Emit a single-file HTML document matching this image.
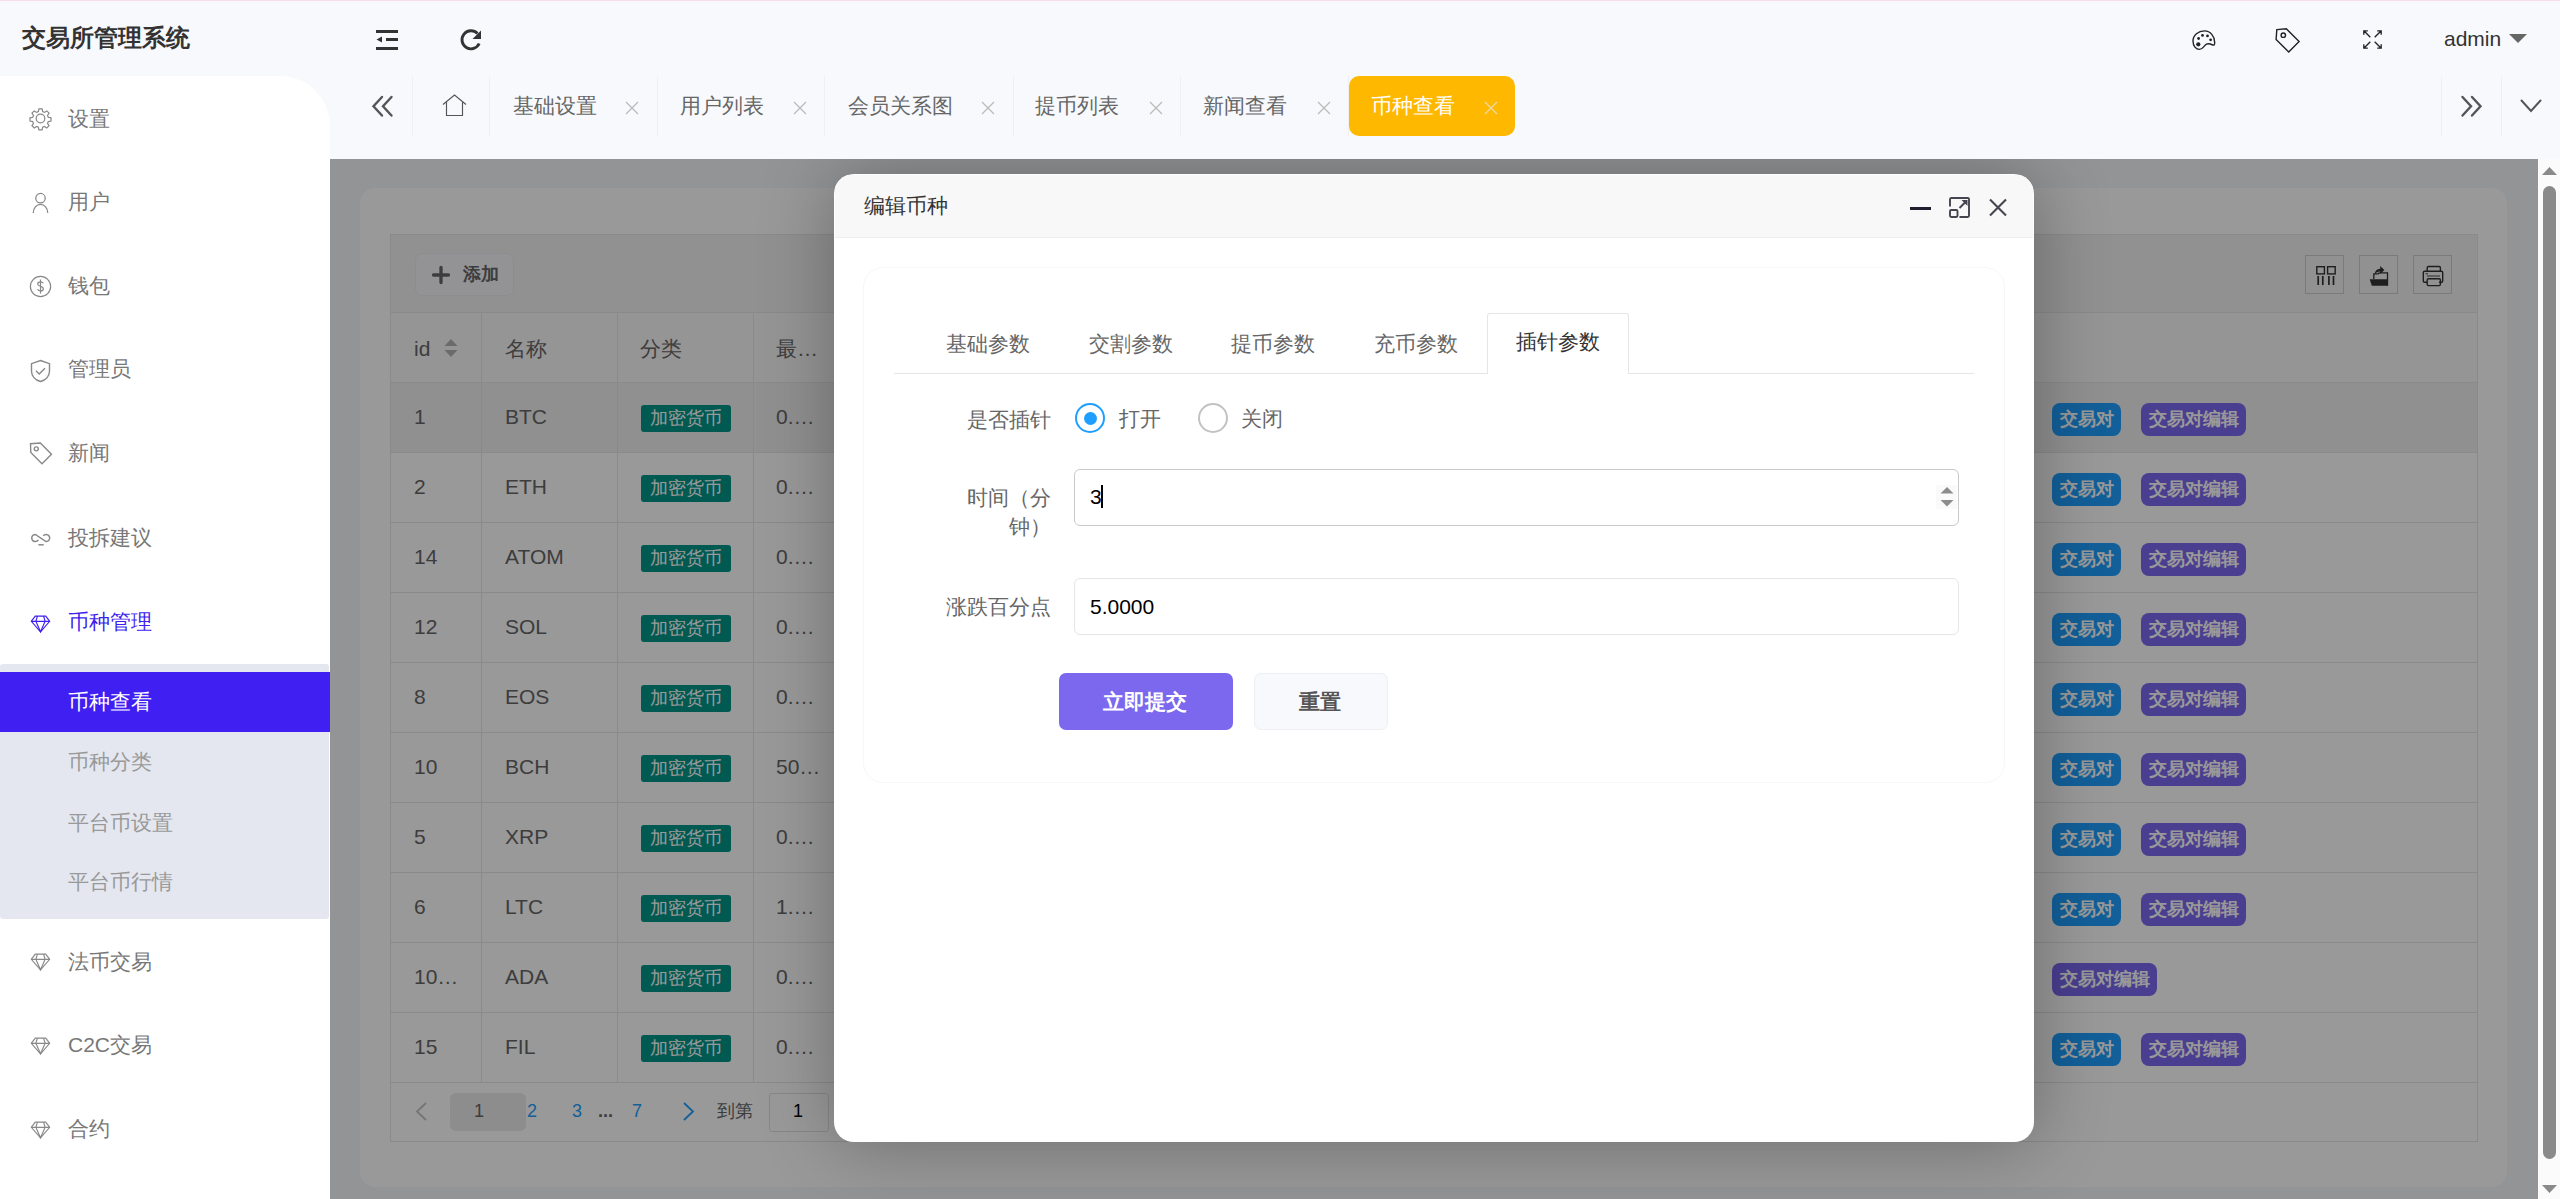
<!DOCTYPE html>
<html><head><meta charset="utf-8">
<style>
*{box-sizing:border-box;margin:0;padding:0}
html,body{width:2560px;height:1199px;overflow:hidden}
body{position:relative;background:#f8f9fc;font-family:"Liberation Sans",sans-serif;color:#333}
.a{position:absolute}
.t{position:absolute;white-space:nowrap;line-height:1}
svg{position:absolute;overflow:visible}
.sep{top:76px;width:1px;height:60px;background:#f0f0f4}
.tb{top:95px;font-size:21px;color:#666}
.cl{top:102px;width:12px;height:12px;fill:none;stroke:#bbb;stroke-width:1.3}
.td{font-size:21px;color:#666}
.tag{height:27px;width:90px;background:#009688;color:#fff;font-size:18px;line-height:27px;text-align:center;border-radius:3px;white-space:nowrap}
.bdg{height:33px;color:#fff;font-size:18px;font-weight:bold;line-height:33px;text-align:center;border-radius:8px;white-space:nowrap}
.tbox{top:255px;width:39px;height:39px;border:1px solid #ccc}
.pg{top:1102px;font-size:18px}
.mt{top:333px;font-size:21px;color:#666}
.fl{font-size:21px;color:#666}
.mi{left:68px;font-size:21px;color:#777}
</style></head><body>
<!-- top pink line -->
<div class="a" style="left:0;top:0;width:2560px;height:1px;background:#f3dfe5"></div>

<!-- header -->
<div class="t" id="title" style="left:22px;top:26px;font-size:24px;font-weight:bold;color:#333">交易所管理系统</div>


<!-- header icons -->
<svg style="left:376px;top:30px" width="22" height="20" viewBox="0 0 22 20"><rect x="0" y="0" width="22" height="3" fill="#333"/><rect x="10" y="8" width="12" height="3" fill="#333"/><rect x="0" y="17" width="22" height="3" fill="#333"/><path d="M0.5 9.5L6 6.5v6z" fill="#333"/></svg>
<svg style="left:460px;top:29px" width="22" height="22" viewBox="0 0 22 22"><path d="M19.2 14.5A9 9 0 1 1 17.5 4.6" fill="none" stroke="#333" stroke-width="2.9"/><path d="M21 1.5v8.5h-8.5z" fill="#333"/></svg>
<svg style="left:2192px;top:30px" width="25" height="21" viewBox="0 0 25 21" fill="none" stroke="#222" stroke-width="1.4"><path d="M12.5 .9C6.3 .9 1 5 1 11c0 5 3 8.4 6.5 8.4 3.2 0 4.4-3.7 7-5.2 2.3-1.3 4.7.1 6.3.8 1.2.4 1.9-.3 1.9-2.5C22.7 6.4 18.4.9 12.5.9z"/><circle cx="6.3" cy="14.3" r="2.1" fill="#222" stroke="none"/><circle cx="6.6" cy="8.5" r="1.4" fill="#222" stroke="none"/><circle cx="10.5" cy="5.4" r="1.4" fill="#222" stroke="none"/><circle cx="15.5" cy="5.9" r="1.4" fill="#222" stroke="none"/><circle cx="18.6" cy="9.8" r="1.4" fill="#222" stroke="none"/></svg>
<svg style="left:2275px;top:27px" width="26" height="26" viewBox="0 0 26 26" fill="none" stroke="#222" stroke-width="1.4"><path d="M1.8 2.6L11.3 1.8l12.8 12.8-10.4 10.4L1.1 12.4z"/><circle cx="8.3" cy="8.2" r="2.2"/></svg>
<svg style="left:2363px;top:30px" width="19" height="19" viewBox="0 0 19 19" fill="none" stroke="#222" stroke-width="1.3"><path d="M.8 4.8V.8h4M.8 .8l6.5 6.5M14.2 .8h4v4M18.2 .8l-6.5 6.5M.8 14.2v4h4M.8 18.2l6.5-6.5M18.2 14.2v4h-4M18.2 18.2l-6.5-6.5"/></svg>
<div class="t" style="left:2444px;top:28px;font-size:21px;color:#333">admin</div>
<svg style="left:2509px;top:34px" width="18" height="9" viewBox="0 0 18 9"><path d="M0 0h18L9 9z" fill="#666"/></svg>

<!-- tabs -->
<svg style="left:372px;top:96px" width="21" height="21" viewBox="0 0 21 21" fill="none" stroke="#555" stroke-width="2.4" stroke-linecap="round"><path d="M10 1L1.5 10.2 10 19.5M19.5 1L11 10.2l8.5 9.3"/></svg>
<div class="a sep" style="left:412px"></div>
<svg style="left:442px;top:94px" width="25" height="23" viewBox="0 0 25 23" fill="none" stroke="#555" stroke-width="1.15"><path d="M1 10.5L12.5 1 24 10.5M4.5 8.3V21.5h16V8.3"/></svg>
<div class="a sep" style="left:489px"></div>
<div class="t tb" style="left:513px">基础设置</div><svg class="cl" style="left:626px"><path d="M0 0L12 12M12 0L0 12"/></svg>
<div class="a sep" style="left:657px"></div>
<div class="t tb" style="left:680px">用户列表</div><svg class="cl" style="left:794px"><path d="M0 0L12 12M12 0L0 12"/></svg>
<div class="a sep" style="left:824px"></div>
<div class="t tb" style="left:848px">会员关系图</div><svg class="cl" style="left:982px"><path d="M0 0L12 12M12 0L0 12"/></svg>
<div class="a sep" style="left:1013px"></div>
<div class="t tb" style="left:1035px">提币列表</div><svg class="cl" style="left:1150px"><path d="M0 0L12 12M12 0L0 12"/></svg>
<div class="a sep" style="left:1180px"></div>
<div class="t tb" style="left:1203px">新闻查看</div><svg class="cl" style="left:1318px"><path d="M0 0L12 12M12 0L0 12"/></svg>
<div class="a sep" style="left:1348px"></div>
<div class="a" style="left:1349px;top:76px;width:166px;height:60px;background:#ffb800;border-radius:10px"></div>
<div class="t tb" style="left:1371px;color:#fff">币种查看</div><svg class="cl" style="left:1485px;stroke:#e8d9a8"><path d="M0 0L12 12M12 0L0 12"/></svg>
<div class="a sep" style="left:2441px"></div>
<svg style="left:2461px;top:96px" width="21" height="21" viewBox="0 0 21 21" fill="none" stroke="#555" stroke-width="2.4" stroke-linecap="round"><path d="M1.5 1L10 10.2 1.5 19.5M11 1l8.5 9.2L11 19.5"/></svg>
<div class="a sep" style="left:2501px"></div>
<svg style="left:2520px;top:99px" width="22" height="14" viewBox="0 0 22 14" fill="none" stroke="#555" stroke-width="2" stroke-linecap="round"><path d="M1.5 1.5L11 12 20.5 1.5"/></svg>

<!-- sidebar -->
<div class="a" id="side" style="left:0;top:76px;width:330px;height:1123px;background:#fff;border-top-right-radius:50px"></div>


<!-- sidebar menu -->
<div id="menu">
<svg style="left:30px;top:108px" width="21" height="21" viewBox="0.8 0.8 22.4 22.4" fill="none" stroke="#888" stroke-width="1.3"><circle cx="12" cy="12" r="4.6"/><path d="M10.3 1.8h3.4l.6 2.9 1.9.8 2.5-1.6 2.4 2.4-1.6 2.5.8 1.9 2.9.6v3.4l-2.9.6-.8 1.9 1.6 2.5-2.4 2.4-2.5-1.6-1.9.8-.6 2.9h-3.4l-.6-2.9-1.9-.8-2.5 1.6-2.4-2.4 1.6-2.5-.8-1.9-2.9-.6v-3.4l2.9-.6.8-1.9-1.6-2.5 2.4-2.4 2.5 1.6 1.9-.8z"/></svg>
<div class="t mi" style="top:108px">设置</div>
<svg style="left:30px;top:193px" width="21" height="20" viewBox="1 1.5 22 22" fill="none" stroke="#888" stroke-width="1.4"><circle cx="12" cy="7.2" r="5.2"/><path d="M4 23.5c0-5.2 3.6-9.5 8-9.5s8 4.3 8 9.5"/></svg>
<div class="t mi" style="top:191px">用户</div>
<svg style="left:30px;top:276px" width="21" height="21" viewBox="0.8 0.8 22.4 22.4" fill="none" stroke="#888" stroke-width="1.3"><circle cx="12" cy="12" r="10.8"/><path d="M15 8.5c-.6-1-1.7-1.5-3-1.5-1.7 0-3 .9-3 2.3 0 3 6 1.8 6 5 0 1.4-1.3 2.4-3 2.4-1.4 0-2.6-.6-3.2-1.7M12 4.5v15"/></svg>
<div class="t mi" style="top:275px">钱包</div>
<svg style="left:30px;top:360px" width="21" height="22" viewBox="1.5 1 21 22" fill="none" stroke="#888" stroke-width="1.4"><path d="M12 1.5l9 3.2v7.3c0 5.3-3.9 9.2-9 10.5-5.1-1.3-9-5.2-9-10.5V4.7z"/><path d="M7.5 11.8l3.2 3.2 5.8-5.8"/></svg>
<div class="t mi" style="top:358px">管理员</div>
<svg style="left:30px;top:442px" width="22" height="23" viewBox="1 1 22 22.5" fill="none" stroke="#888" stroke-width="1.4"><path d="M1.5 2.5l.3 8.8L13 22.5l9.5-9.5L11.3 1.8z"/><circle cx="7.3" cy="7.6" r="2"/></svg>
<div class="t mi" style="top:442px">新闻</div>
<svg style="left:30px;top:530px" width="22" height="18" viewBox="30 530 22 18" fill="none" stroke="#888" stroke-width="1.5"><path d="M38.4 539.9A3.6 3.6 0 1 1 35.3 534.4L46 541.6A3.6 3.6 0 1 0 43.2 535.9"/><path d="M38.4 544.8h5.3"/></svg>
<div class="t mi" style="top:527px">投拆建议</div>
<svg style="left:30px;top:613px" width="21" height="21" viewBox="0 0 24 24" fill="none" stroke="#3f1ff0" stroke-width="1.3"><path d="M6 3.5h12l4.5 6L12 21.5 1.5 9.5z"/><path d="M1.5 9.5h21M8.5 3.5l-1.8 6L12 21.5l5.3-12-1.8-6"/></svg>
<div class="t mi" style="top:611px;color:#3f1ff0">币种管理</div>
<div class="a" style="left:0;top:664px;width:329px;height:255px;background:#e4e7ef;border-radius:3px"></div>
<div class="a" style="left:0;top:672px;width:330px;height:60px;background:#3f1ff1"></div>
<div class="t mi" style="top:691px;color:#fff">币种查看</div>
<div class="t mi" style="top:751px;color:#999">币种分类</div>
<div class="t mi" style="top:812px;color:#999">平台币设置</div>
<div class="t mi" style="top:871px;color:#999">平台币行情</div>
<svg style="left:30px;top:951px" width="21" height="21" viewBox="0 0 24 24" fill="none" stroke="#888" stroke-width="1.3"><path d="M6 3.5h12l4.5 6L12 21.5 1.5 9.5z"/><path d="M1.5 9.5h21M8.5 3.5l-1.8 6L12 21.5l5.3-12-1.8-6"/></svg>
<div class="t mi" style="top:951px">法币交易</div>
<svg style="left:30px;top:1035px" width="21" height="21" viewBox="0 0 24 24" fill="none" stroke="#888" stroke-width="1.3"><path d="M6 3.5h12l4.5 6L12 21.5 1.5 9.5z"/><path d="M1.5 9.5h21M8.5 3.5l-1.8 6L12 21.5l5.3-12-1.8-6"/></svg>
<div class="t mi" style="top:1034px">C2C交易</div>
<svg style="left:30px;top:1119px" width="21" height="21" viewBox="0 0 24 24" fill="none" stroke="#888" stroke-width="1.3"><path d="M6 3.5h12l4.5 6L12 21.5 1.5 9.5z"/><path d="M1.5 9.5h21M8.5 3.5l-1.8 6L12 21.5l5.3-12-1.8-6"/></svg>
<div class="t mi" style="top:1118px">合约</div>
</div>

<!-- content -->
<div class="a" id="content" style="left:330px;top:159px;width:2208px;height:1040px;background:#f5f7fa;overflow:hidden">
<div class="a" style="left:-330px;top:-159px;width:2560px;height:1199px">
  <div class="a" style="left:360px;top:188px;width:2147px;height:999px;background:#fff;border-radius:15px"></div>
  <div class="a" style="left:390px;top:234px;width:2088px;height:908px;border:1px solid #e6e6e6;background:#fff"></div>
  <div class="a" style="left:391px;top:235px;width:2086px;height:78px;background:#f2f2f2;border-bottom:1px solid #e6e6e6"></div>
  <div class="a" style="left:415px;top:253px;width:99px;height:43px;background:#f5f6fa;border:1px solid #eaebef;border-radius:7px"></div>
  <svg style="left:432px;top:266px" width="18" height="18" viewBox="0 0 18 18"><path d="M9 1.5v15M1.5 9h15" stroke="#666" stroke-width="3.3" stroke-linecap="round"/></svg>
  <div class="t" style="left:463px;top:265px;font-size:18px;font-weight:bold;color:#666">添加</div>
  <div class="a tbox" style="left:2305px"></div>
  <div class="a tbox" style="left:2359px"></div>
  <div class="a tbox" style="left:2413px"></div>
  <svg style="left:2300px;top:260px" width="160" height="30" viewBox="2300 260 160 30">
  <g fill="none" stroke="#333" stroke-width="1.4"><rect x="2316.8" y="266.7" width="7.6" height="7.2"/><rect x="2327.6" y="266.7" width="7.6" height="7.2"/></g>
  <g stroke="#333" stroke-width="1.7"><path d="M2318.2 276v9M2322.8 276v9M2328.9 276v9M2333.5 276v9"/></g>
  <path d="M2373.8 279v-5.2h4.2l1.3-0.9h8.2v12.5" fill="none" stroke="#333" stroke-width="1.3"/>
  <path d="M2369.7 279.3h18.3v6.5h-16.2z" fill="#333"/>
  <path d="M2374.8 274.5c0-3.5 2-5.6 5.4-5.8v-2.6l4.2 3.9-4.2 3.9v-2.5c-2.6 0-4.3 1-5.4 3.1z" fill="#333"/>
  <g fill="none" stroke="#333" stroke-width="1.4"><path d="M2427.2 271.2v-3.4c0-.8.6-1.3 1.3-1.3h10.6c.8 0 1.3.6 1.3 1.3v3.4"/><path d="M2427 282.2h-2.4c-.8 0-1.3-.6-1.3-1.3v-8.3c0-.8.6-1.3 1.3-1.3h16.8c.8 0 1.3.6 1.3 1.3v8.3c0 .8-.6 1.3-1.3 1.3h-2.4"/><rect x="2427.2" y="278.8" width="13.2" height="6.8" rx="1.3"/><path d="M2427 276h13" stroke-width="0.9"/><path d="M2425.5 273.8h2.5" stroke-width="0.9"/></g>
</svg>
  <!-- header row -->
  <div class="a" style="left:391px;top:313px;width:2086px;height:70px;background:#f8f8f8;border-bottom:1px solid #e6e6e6"></div>
  <div class="a" style="left:481px;top:313px;width:1px;height:70px;background:#e6e6e6"></div>
  <div class="a" style="left:617px;top:313px;width:1px;height:70px;background:#e6e6e6"></div>
  <div class="a" style="left:753px;top:313px;width:1px;height:70px;background:#e6e6e6"></div>
  <div class="t td" style="left:414px;top:338px">id</div>
  <svg style="left:444px;top:339px" width="14" height="18" viewBox="0 0 14 18"><path d="M7 0l6.5 7H.5z" fill="#b2b2b2"/><path d="M7 18l6.5-7H.5z" fill="#b2b2b2"/></svg>
  <div class="t td" style="left:505px;top:338px">名称</div>
  <div class="t td" style="left:640px;top:338px">分类</div>
  <div class="t td" style="left:776px;top:338px">最…</div>
<div class="a" style="left:391px;top:383px;width:2086px;height:70px;background:#f0f0f0;border-bottom:1px solid #e6e6e6"></div>
<div class="a" style="left:481px;top:383px;width:1px;height:70px;background:#e6e6e6"></div>
<div class="a" style="left:617px;top:383px;width:1px;height:70px;background:#e6e6e6"></div>
<div class="a" style="left:753px;top:383px;width:1px;height:70px;background:#e6e6e6"></div>
<div class="t td" style="left:414px;top:406px">1</div>
<div class="t td" style="left:505px;top:406px">BTC</div>
<div class="a tag" style="left:641px;top:405px">加密货币</div>
<div class="t td" style="left:776px;top:406px">0.…</div>
<div class="a bdg" style="left:2052px;top:403px;width:69px;background:#1e9fff">交易对</div>
<div class="a bdg" style="left:2141px;top:403px;width:105px;background:#7b68ee">交易对编辑</div>
<div class="a" style="left:391px;top:453px;width:2086px;height:70px;background:#fff;border-bottom:1px solid #e6e6e6"></div>
<div class="a" style="left:481px;top:453px;width:1px;height:70px;background:#e6e6e6"></div>
<div class="a" style="left:617px;top:453px;width:1px;height:70px;background:#e6e6e6"></div>
<div class="a" style="left:753px;top:453px;width:1px;height:70px;background:#e6e6e6"></div>
<div class="t td" style="left:414px;top:476px">2</div>
<div class="t td" style="left:505px;top:476px">ETH</div>
<div class="a tag" style="left:641px;top:475px">加密货币</div>
<div class="t td" style="left:776px;top:476px">0.…</div>
<div class="a bdg" style="left:2052px;top:473px;width:69px;background:#1e9fff">交易对</div>
<div class="a bdg" style="left:2141px;top:473px;width:105px;background:#7b68ee">交易对编辑</div>
<div class="a" style="left:391px;top:523px;width:2086px;height:70px;background:#fff;border-bottom:1px solid #e6e6e6"></div>
<div class="a" style="left:481px;top:523px;width:1px;height:70px;background:#e6e6e6"></div>
<div class="a" style="left:617px;top:523px;width:1px;height:70px;background:#e6e6e6"></div>
<div class="a" style="left:753px;top:523px;width:1px;height:70px;background:#e6e6e6"></div>
<div class="t td" style="left:414px;top:546px">14</div>
<div class="t td" style="left:505px;top:546px">ATOM</div>
<div class="a tag" style="left:641px;top:545px">加密货币</div>
<div class="t td" style="left:776px;top:546px">0.…</div>
<div class="a bdg" style="left:2052px;top:543px;width:69px;background:#1e9fff">交易对</div>
<div class="a bdg" style="left:2141px;top:543px;width:105px;background:#7b68ee">交易对编辑</div>
<div class="a" style="left:391px;top:593px;width:2086px;height:70px;background:#fff;border-bottom:1px solid #e6e6e6"></div>
<div class="a" style="left:481px;top:593px;width:1px;height:70px;background:#e6e6e6"></div>
<div class="a" style="left:617px;top:593px;width:1px;height:70px;background:#e6e6e6"></div>
<div class="a" style="left:753px;top:593px;width:1px;height:70px;background:#e6e6e6"></div>
<div class="t td" style="left:414px;top:616px">12</div>
<div class="t td" style="left:505px;top:616px">SOL</div>
<div class="a tag" style="left:641px;top:615px">加密货币</div>
<div class="t td" style="left:776px;top:616px">0.…</div>
<div class="a bdg" style="left:2052px;top:613px;width:69px;background:#1e9fff">交易对</div>
<div class="a bdg" style="left:2141px;top:613px;width:105px;background:#7b68ee">交易对编辑</div>
<div class="a" style="left:391px;top:663px;width:2086px;height:70px;background:#fff;border-bottom:1px solid #e6e6e6"></div>
<div class="a" style="left:481px;top:663px;width:1px;height:70px;background:#e6e6e6"></div>
<div class="a" style="left:617px;top:663px;width:1px;height:70px;background:#e6e6e6"></div>
<div class="a" style="left:753px;top:663px;width:1px;height:70px;background:#e6e6e6"></div>
<div class="t td" style="left:414px;top:686px">8</div>
<div class="t td" style="left:505px;top:686px">EOS</div>
<div class="a tag" style="left:641px;top:685px">加密货币</div>
<div class="t td" style="left:776px;top:686px">0.…</div>
<div class="a bdg" style="left:2052px;top:683px;width:69px;background:#1e9fff">交易对</div>
<div class="a bdg" style="left:2141px;top:683px;width:105px;background:#7b68ee">交易对编辑</div>
<div class="a" style="left:391px;top:733px;width:2086px;height:70px;background:#fff;border-bottom:1px solid #e6e6e6"></div>
<div class="a" style="left:481px;top:733px;width:1px;height:70px;background:#e6e6e6"></div>
<div class="a" style="left:617px;top:733px;width:1px;height:70px;background:#e6e6e6"></div>
<div class="a" style="left:753px;top:733px;width:1px;height:70px;background:#e6e6e6"></div>
<div class="t td" style="left:414px;top:756px">10</div>
<div class="t td" style="left:505px;top:756px">BCH</div>
<div class="a tag" style="left:641px;top:755px">加密货币</div>
<div class="t td" style="left:776px;top:756px">50…</div>
<div class="a bdg" style="left:2052px;top:753px;width:69px;background:#1e9fff">交易对</div>
<div class="a bdg" style="left:2141px;top:753px;width:105px;background:#7b68ee">交易对编辑</div>
<div class="a" style="left:391px;top:803px;width:2086px;height:70px;background:#fff;border-bottom:1px solid #e6e6e6"></div>
<div class="a" style="left:481px;top:803px;width:1px;height:70px;background:#e6e6e6"></div>
<div class="a" style="left:617px;top:803px;width:1px;height:70px;background:#e6e6e6"></div>
<div class="a" style="left:753px;top:803px;width:1px;height:70px;background:#e6e6e6"></div>
<div class="t td" style="left:414px;top:826px">5</div>
<div class="t td" style="left:505px;top:826px">XRP</div>
<div class="a tag" style="left:641px;top:825px">加密货币</div>
<div class="t td" style="left:776px;top:826px">0.…</div>
<div class="a bdg" style="left:2052px;top:823px;width:69px;background:#1e9fff">交易对</div>
<div class="a bdg" style="left:2141px;top:823px;width:105px;background:#7b68ee">交易对编辑</div>
<div class="a" style="left:391px;top:873px;width:2086px;height:70px;background:#fff;border-bottom:1px solid #e6e6e6"></div>
<div class="a" style="left:481px;top:873px;width:1px;height:70px;background:#e6e6e6"></div>
<div class="a" style="left:617px;top:873px;width:1px;height:70px;background:#e6e6e6"></div>
<div class="a" style="left:753px;top:873px;width:1px;height:70px;background:#e6e6e6"></div>
<div class="t td" style="left:414px;top:896px">6</div>
<div class="t td" style="left:505px;top:896px">LTC</div>
<div class="a tag" style="left:641px;top:895px">加密货币</div>
<div class="t td" style="left:776px;top:896px">1.…</div>
<div class="a bdg" style="left:2052px;top:893px;width:69px;background:#1e9fff">交易对</div>
<div class="a bdg" style="left:2141px;top:893px;width:105px;background:#7b68ee">交易对编辑</div>
<div class="a" style="left:391px;top:943px;width:2086px;height:70px;background:#fff;border-bottom:1px solid #e6e6e6"></div>
<div class="a" style="left:481px;top:943px;width:1px;height:70px;background:#e6e6e6"></div>
<div class="a" style="left:617px;top:943px;width:1px;height:70px;background:#e6e6e6"></div>
<div class="a" style="left:753px;top:943px;width:1px;height:70px;background:#e6e6e6"></div>
<div class="t td" style="left:414px;top:966px">10…</div>
<div class="t td" style="left:505px;top:966px">ADA</div>
<div class="a tag" style="left:641px;top:965px">加密货币</div>
<div class="t td" style="left:776px;top:966px">0.…</div>
<div class="a bdg" style="left:2052px;top:963px;width:105px;background:#7b68ee">交易对编辑</div>
<div class="a" style="left:391px;top:1013px;width:2086px;height:70px;background:#fff;border-bottom:1px solid #e6e6e6"></div>
<div class="a" style="left:481px;top:1013px;width:1px;height:70px;background:#e6e6e6"></div>
<div class="a" style="left:617px;top:1013px;width:1px;height:70px;background:#e6e6e6"></div>
<div class="a" style="left:753px;top:1013px;width:1px;height:70px;background:#e6e6e6"></div>
<div class="t td" style="left:414px;top:1036px">15</div>
<div class="t td" style="left:505px;top:1036px">FIL</div>
<div class="a tag" style="left:641px;top:1035px">加密货币</div>
<div class="t td" style="left:776px;top:1036px">0.…</div>
<div class="a bdg" style="left:2052px;top:1033px;width:69px;background:#1e9fff">交易对</div>
<div class="a bdg" style="left:2141px;top:1033px;width:105px;background:#7b68ee">交易对编辑</div>
  <!-- pagination -->
  <svg style="left:415px;top:1102px" width="12" height="19" viewBox="0 0 12 19" fill="none" stroke="#c2c2c2" stroke-width="1.8"><path d="M11 1L2 9.5 11 18"/></svg>
  <div class="a" style="left:450px;top:1093px;width:76px;height:38px;background:#ebebeb;border-radius:6px"></div>
  <div class="t pg" style="left:474px;color:#666">1</div>
  <div class="t pg" style="left:527px;color:#1e9fff">2</div>
  <div class="t pg" style="left:572px;color:#1e9fff">3</div>
  <div class="t pg" style="left:598px;color:#666;font-weight:bold">...</div>
  <div class="t pg" style="left:632px;color:#1e9fff">7</div>
  <svg style="left:683px;top:1102px" width="12" height="19" viewBox="0 0 12 19" fill="none" stroke="#1e9fff" stroke-width="1.8"><path d="M1 1l9 8.5L1 18"/></svg>
  <div class="t pg" style="left:717px;color:#666">到第</div>
  <div class="a" style="left:769px;top:1093px;width:60px;height:39px;border:1px solid #e2e2e2;border-radius:3px;background:#fff"></div>
  <div class="t pg" style="left:793px;color:#000">1</div>

  <!-- overlay -->
  <div class="a" style="left:330px;top:159px;width:2208px;height:1040px;background:rgba(0,0,0,0.4)"></div>

  <!-- modal -->
  <div class="a" id="modal" style="left:834px;top:174px;width:1200px;height:968px;background:#fff;border-radius:20px;box-shadow:1px 1px 75px rgba(0,0,0,0.3);overflow:hidden">
    <div class="a" style="left:1px;top:1px;width:1198px;height:63px;background:#f8f8f8;border-bottom:1px solid #eee"></div>
  </div>
  <div id="mc">
  <div class="t" style="left:864px;top:195px;font-size:21px;color:#333">编辑币种</div>
  <div class="a" style="left:1910px;top:207px;width:21px;height:3px;background:#1f1f30"></div>
  <svg style="left:1949px;top:197px" width="21" height="21" viewBox="0 0 21 21" fill="none" stroke="#45454f" stroke-width="1.9"><path d="M1 9.5V2.2C1 1.5 1.5 1 2.2 1h16.6c.7 0 1.2.5 1.2 1.2v16.6c0 .7-.5 1.2-1.2 1.2H10.5"/><rect x="1" y="13" width="7.5" height="7" rx="1.2"/><path d="M10.5 11L17.5 4"/><path d="M12.5 3h6v6z" fill="#45454f" stroke="none"/></svg>
  <svg style="left:1989px;top:199px" width="18" height="17" viewBox="0 0 18 17" fill="none" stroke="#45454f" stroke-width="2.1"><path d="M1 0.5l16 16M17 0.5l-16 16"/></svg>
  <!-- inner card -->
  <div class="a" style="left:863px;top:267px;width:1142px;height:516px;border:1px solid #f7f7f7;border-radius:20px"></div>
  <div class="a" style="left:894px;top:373px;width:1080px;height:1px;background:#e6e6e6"></div>
  <div class="a" style="left:1487px;top:313px;width:142px;height:61px;border:1px solid #e6e6e6;border-bottom:none;border-radius:3px 3px 0 0;background:#fff"></div>
  <div class="t mt" style="left:946px">基础参数</div>
  <div class="t mt" style="left:1089px">交割参数</div>
  <div class="t mt" style="left:1231px">提币参数</div>
  <div class="t mt" style="left:1374px">充币参数</div>
  <div class="t mt" style="left:1516px;top:331px;color:#333">插针参数</div>
  <!-- form -->
  <div class="t fl" style="left:967px;top:409px">是否插针</div>
  <div class="a" style="left:1075px;top:403px;width:30px;height:30px;border:2.3px solid #1e9fff;border-radius:50%"></div>
  <div class="a" style="left:1084px;top:412px;width:13px;height:13px;background:#1e9fff;border-radius:50%"></div>
  <div class="t fl" style="left:1119px;top:408px">打开</div>
  <div class="a" style="left:1198px;top:403px;width:30px;height:30px;border:2.3px solid #c2c2c2;border-radius:50%"></div>
  <div class="t fl" style="left:1241px;top:408px">关闭</div>
  <div class="t fl" style="left:967px;top:487px">时间（分</div>
  <div class="t fl" style="left:1009px;top:516px">钟）</div>
  <div class="a" style="left:1074px;top:469px;width:885px;height:57px;border:1.3px solid #c9c9c9;border-radius:6px"></div>
  <div class="t" style="left:1090px;top:486px;font-size:21px;color:#000">3</div>
  <div class="a" style="left:1101px;top:485px;width:2px;height:23px;background:#000"></div>
  <div class="a" style="left:1936px;top:485px;width:21px;height:24px;background:#fafafa"></div>
  <svg style="left:1940px;top:487px" width="14" height="20" viewBox="0 0 14 20"><path d="M7 0l6.5 6.5H.5z" fill="#8c8c8c"/><path d="M7 19.5l6.5-6.5H.5z" fill="#8c8c8c"/></svg>
  <div class="t fl" style="left:946px;top:596px">涨跌百分点</div>
  <div class="a" style="left:1074px;top:578px;width:885px;height:57px;border:1.3px solid #e6e6e6;border-radius:6px"></div>
  <div class="t" style="left:1090px;top:596px;font-size:21px;color:#000">5.0000</div>
  <div class="a" style="left:1059px;top:673px;width:174px;height:57px;background:#7b68ee;border-radius:7px"></div>
  <div class="t" style="left:1103px;top:691px;font-size:21px;font-weight:bold;color:#fff">立即提交</div>
  <div class="a" style="left:1254px;top:673px;width:134px;height:57px;background:#f8f9fc;border:1px solid #eeeff3;border-radius:7px"></div>
  <div class="t" style="left:1299px;top:691px;font-size:21px;font-weight:bold;color:#555">重置</div>
  </div>
</div>
</div>

<!-- scrollbar -->
<div class="a" style="left:2538px;top:159px;width:22px;height:1040px;background:#fbfbfb"></div>
<div class="a" style="left:2543px;top:186px;width:13px;height:973px;background:#8a8a8a;border-radius:7px"></div>
<svg style="left:2542px;top:167px" width="15" height="8" viewBox="0 0 15 8"><path d="M7.5 0L15 8H0z" fill="#8a8a8a"/></svg>
<svg style="left:2542px;top:1185px" width="15" height="8" viewBox="0 0 15 8"><path d="M0 0h15L7.5 8z" fill="#8a8a8a"/></svg>
</body></html>
